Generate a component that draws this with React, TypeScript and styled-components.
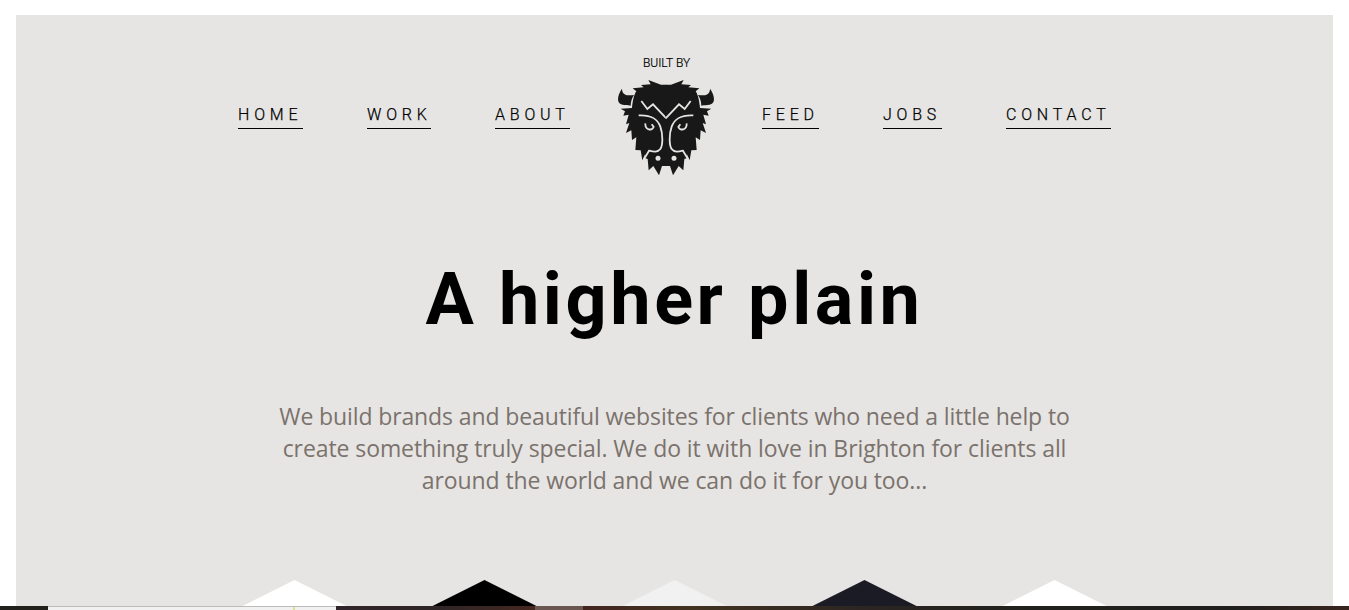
import React from "react";
import styled, { createGlobalStyle } from "styled-components";

const Global = createGlobalStyle`
  * { box-sizing: border-box; }
  body { margin: 0; background: #fff; overflow: hidden; }
`;

const Page = styled.div`
  display: flex;
  flex-direction: column;
  height: 610px;
  width: 1349px;
  overflow: hidden;
  background: #fff;
  font-family: Roboto, "Liberation Sans", sans-serif;
`;

const Panel = styled.main`
  flex: 1;
  min-height: 0;
  margin: 15px 16px 0;
  background: #e6e5e3;
  display: flex;
  flex-direction: column;
  overflow: hidden;
`;

const Nav = styled.nav`
  display: flex;
  justify-content: center;
  height: 161px;
  padding-top: 39px;
  flex: none;
`;

const Group = styled.div`
  display: flex;
  gap: 64px;
  padding-top: 50px;
`;

const NavLink = styled.a<{ $width: number }>`
  width: ${(p) => p.$width}px;
  height: 25px;
  border-bottom: 1px solid #000;
  color: #000;
  font-size: 16px;
  font-weight: 300;
  -webkit-text-stroke: 0.25px #000;
  line-height: 21px;
  letter-spacing: 4.8px;
  white-space: nowrap;
  text-decoration: none;
`;

const Brand = styled.div`
  width: 96px;
  margin: 0 48px;
  display: flex;
  flex-direction: column;
  align-items: center;
`;

const BuiltBy = styled.span`
  font-size: 12px;
  font-weight: 300;
  -webkit-text-stroke: 0.2px #000;
  line-height: 18px;
  height: 24px;
  padding-left: 1px;
  color: #000;
`;

const Title = styled.h1`
  margin: 82px 0 0;
  height: 84px;
  line-height: 84px;
  font-size: 72px;
  font-weight: 700;
  letter-spacing: 3.6px;
  text-align: center;
  color: #000;
`;

const Intro = styled.p`
  margin: 58px 0 0;
  display: flex;
  flex-direction: column;
  align-items: center;
  font-family: "Open Sans", "Noto Sans", sans-serif;
  font-size: 23px;
  line-height: 32px;
  color: #7b726c;
`;

const Line = styled.span<{ $spacing: number }>`
  white-space: nowrap;
  letter-spacing: ${(p) => p.$spacing}px;
`;

const Hexagons = styled.div`
  display: flex;
  justify-content: center;
  gap: 10px;
  margin-top: 84px;
`;

const Hexagon = styled.div<{ $color: string }>`
  flex: none;
  width: 180px;
  height: 180px;
  background: ${(p) => p.$color};
  clip-path: polygon(50% 0, 100% 25%, 100% 75%, 50% 100%, 0 75%, 0 25%);
`;

const Strip = styled.footer`
  flex: none;
  display: flex;
  height: 4px;
`;

const Segment = styled.div<{ $width?: number; $fill: string; $edge?: boolean }>`
  ${(p) => (p.$width ? `width: ${p.$width}px;` : "flex: 1;")}
  background: ${(p) => p.$fill};
  border-top: ${(p) => (p.$edge ? "1px solid #bcbcbc" : "0")};
`;

const Tick = styled.div`
  width: 2px;
  height: 3px;
  margin-left: 245px;
  background: #dbe48a;
`;

const HalfFace = () => (
  <>
    <path
      fill="#181818"
      d="M181 119H165L127 105L134 118L105 120L113 127L80 130L91 139C83 151 80 170 78 189L44 191L57 199L52 212L68 209L60 238L70 234L60 264L76 256L78 285L91 277L88 315L104 316L109 346L118 326L116 339L125 342L128 376L142 363L159 391L168 363H181Z"
    />
    <path
      fill="#181818"
      d="M48 131C39 143 34 158 37 169C40 181 56 180 74 182C74 170 78 159 84 150C66 153 48 151 48 131Z"
    />
    <g fill="none" stroke="#e6e5e3" strokeWidth="5.4">
      <path d="M106 168L124 192L141 178L181 220" />
      <path d="M98 211C139 209 155 223 163 245C171 267 171 301 163 312C155 323 142 320 129 317L113 344" />
      <path d="M118 235C117 256 138 258 143 246L137 238" />
    </g>
    <circle cx="156" cy="340" r="7.5" fill="#e6e5e3" />
  </>
);

const Bison = () => (
  <svg width="96" height="98" viewBox="36 99 288 294" aria-hidden="true">
    <HalfFace />
    <g transform="translate(360 0) scale(-1 1)">
      <HalfFace />
    </g>
  </svg>
);

const left = [
  { label: "HOME", width: 65 },
  { label: "WORK", width: 64 },
  { label: "ABOUT", width: 75 },
];
const right = [
  { label: "FEED", width: 57 },
  { label: "JOBS", width: 59 },
  { label: "CONTACT", width: 105 },
];
const hexagons = ["#ffffff", "#000000", "#f1f1f1", "#1b1b25", "#ffffff"];

export default function App() {
  return (
    <Page>
      <Global />
      <Panel>
        <Nav>
          <Group>
            {left.map((l) => (
              <NavLink key={l.label} $width={l.width}>{l.label}</NavLink>
            ))}
          </Group>
          <Brand>
            <BuiltBy>BUILT BY</BuiltBy>
            <Bison />
          </Brand>
          <Group>
            {right.map((l) => (
              <NavLink key={l.label} $width={l.width}>{l.label}</NavLink>
            ))}
          </Group>
        </Nav>
        <Title>A higher plain</Title>
        <Intro>
          <Line $spacing={-0.115}>We build brands and beautiful websites for clients who need a little help to</Line>
          <Line $spacing={-0.08}>create something truly special. We do it with love in Brighton for clients all</Line>
          <Line $spacing={-0.1}>around the world and we can do it for you too...</Line>
        </Intro>
        <Hexagons>
          {hexagons.map((c, i) => (
            <Hexagon key={i} $color={c} />
          ))}
        </Hexagons>
      </Panel>
      <Strip>
        <Segment $width={48} $fill="#22211b" />
        <Segment $width={288} $fill="#f1f1f1" $edge>
          <Tick />
        </Segment>
        <Segment $width={199} $fill="linear-gradient(90deg, #30252a, #2e2526 50%, #45271f)" />
        <Segment $width={48} $fill="#6b5751" />
        <Segment $fill="linear-gradient(90deg, #42251f, #423321 14%, #2b2422 38%, #20211c 60%, #201e1d 85%, #38251e)" />
      </Strip>
    </Page>
  );
}
